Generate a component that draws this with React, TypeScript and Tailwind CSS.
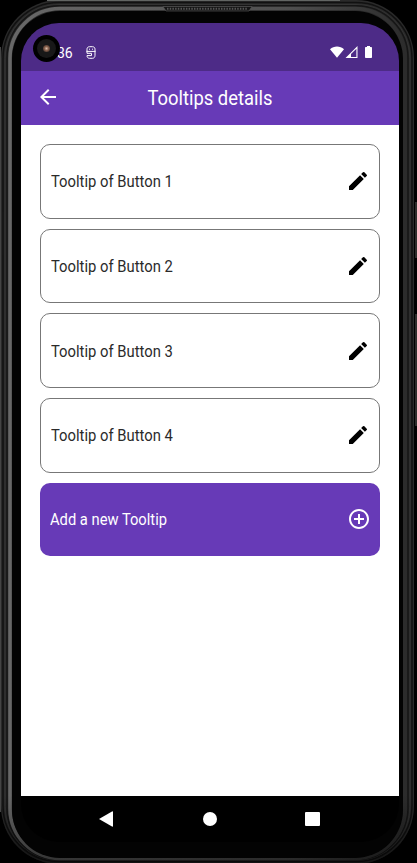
import React from "react";

function Pencil() {
  return (
    <svg viewBox="0 0 24 24" className="mr-[9px] h-6 w-6 shrink-0" fill="#000">
      <path d="M3 17.25V21h3.75L17.81 9.94l-3.75-3.75L3 17.25zM20.71 7.04a.996.996 0 0 0 0-1.41l-2.34-2.34a.996.996 0 0 0-1.41 0l-1.83 1.83 3.75 3.75 1.83-1.83z" />
    </svg>
  );
}

function PhoneBody() {
  return (
    <svg viewBox="0 0 417 863" className="absolute inset-0 h-full w-full" fill="none">
      <defs>
        <linearGradient id="rim" x1="0" y1="0" x2="1" y2="0">
          <stop offset="0" stopColor="#686868" />
          <stop offset="0.7" stopColor="#505050" />
          <stop offset="1" stopColor="#2c2c2c" />
        </linearGradient>
        <linearGradient id="shade" x1="0" y1="0" x2="0" y2="1">
          <stop offset="0.92" stopColor="#000" stopOpacity="0" />
          <stop offset="1" stopColor="#000" stopOpacity="0.5" />
        </linearGradient>
      </defs>
      <path d="M415 202h2v56h-2zM415 314h2v112h-2z" fill="#2d2d2b" />
      <rect x="1" y="0" width="413" height="864" rx="58" fill="#2a2a2a" />
      <path d="M47 .5h293" stroke="#626563" />
      <path d="M.5 47v765" stroke="#444" />
      <rect x="3" y="2.500" width="409" height="859" rx="56" stroke="#111" strokeWidth="1.500" />
      <rect x="5" y="4.500" width="405" height="856" rx="54" stroke="#333" />
      <rect x="7" y="5.800" width="401" height="854" rx="52" stroke="#161616" strokeWidth="1.500" />
      <rect x="10" y="8.500" width="395" height="850" rx="50" stroke="url(#rim)" strokeWidth="3.500" />
      <rect x="1" y="0" width="413" height="864" rx="58" fill="url(#shade)" />
      <rect x="12" y="11" width="391" height="847" rx="48" fill="#030303" />
      <path d="M163 6.500h89l-3 4.500h-83z" fill="#151515" stroke="#555" strokeWidth=".7" />
      <path d="M167 8.800h81" stroke="#555" strokeWidth="2" strokeDasharray="1.500 1.200" />
    </svg>
  );
}

function StatusBar() {
  return (
    <div className="relative flex h-12 shrink-0 items-center bg-[#4d2b87] pt-[10px] pl-[36px] text-white">
      <span className="mt-px text-[14px] leading-[18px]">36</span>
      <svg viewBox="0 0 10 13" className="ml-[13px] h-[13px] w-[10px]" fill="none" stroke="#fff" strokeWidth="1">
        <path d="M1 5V3.2C1 1.700 2 .7 3.500.7h3C8 .7 9 1.700 9 3.200V5M.3 5.400h9.400M1 5.400v1.900h4.700M9 5.400v4c0 1.700-1 2.900-2.500 2.900h-3C2 12.300 1 11.200 1 9.600h4.500V7.500" />
        <path d="M3 3.200h1M6 3.200h1" />
      </svg>
      <svg viewBox="0 0 42 13" className="mr-[27px] ml-auto h-[13px] w-[42px]" fill="#fff">
        <path d="M0 3.200C3.800-.3 10.200-.3 14 3.200L7 11.700z" />
        <path fillRule="evenodd" d="M27.500 0v12H15.500zM26.400 2.700l-5.400 5.400v2.800h5.400z" />
        <path d="M37 0h3v1h1.200c.5 0 .8.300.8.800v9.400c0 .5-.3.800-.8.800h-5.400c-.5 0-.8-.3-.8-.8V1.800c0-.5.300-.8.800-.8H37z" />
      </svg>
      <div className="absolute top-[12px] left-[12px] flex h-[27px] w-[27px] items-center justify-center rounded-full bg-black">
        <div className="flex h-[19px] w-[19px] items-center justify-center rounded-full bg-[#181818]">
          <div className="h-[7px] w-[7px] rounded-full bg-[radial-gradient(circle,#d8b9a5_0%,#805b48_45%,#292323_100%)]" />
        </div>
      </div>
    </div>
  );
}

export default function App() {
  return (
    <div className="relative h-[863px] w-[417px] overflow-hidden bg-black font-['Roboto',sans-serif]">
      <PhoneBody />
      <div className="relative pt-[23px] pl-[21px]">
        <div className="flex h-[819px] w-[378px] flex-col overflow-hidden rounded-[38px]">
          <StatusBar />
          <header className="relative flex h-[54px] shrink-0 items-center justify-center bg-[#673ab7] text-white">
            <svg viewBox="0 0 24 24" className="absolute top-[14px] left-[15px] h-6 w-6" fill="#fff">
              <path d="M20 11H7.830l5.590-5.590L12 4l-8 8 8 8 1.410-1.410L7.830 13H20z" />
            </svg>
            <h1 className="scale-x-[0.92] text-[20px] font-normal">Tooltips details</h1>
          </header>
          <main className="flex flex-1 flex-col gap-[10px] bg-white px-[19px] pt-[19px]">
            {[1, 2, 3, 4].map((n) => (
              <div key={n} className="flex h-[74.700px] shrink-0 items-center justify-between rounded-[10px] border border-[#777] pl-[10px] text-[16px] text-[#2a2a2a]">
                <span className="mt-[2px] origin-left scale-x-[0.925]">Tooltip of Button {n}</span>
                <Pencil />
              </div>
            ))}
            <div className="flex h-[73px] shrink-0 items-center justify-between rounded-[10px] bg-[#673ab7] pr-[9px] pl-[10px] text-[16px] text-white">
              <span className="mt-[2px] origin-left scale-x-[0.92]">Add a new Tooltip</span>
              <svg viewBox="0 0 24 24" className="h-6 w-6" fill="#fff">
                <path d="M13 7h-2v4H7v2h4v4h2v-4h4v-2h-4V7zm-1-5C6.480 2 2 6.480 2 12s4.480 10 10 10 10-4.480 10-10S17.520 2 12 2zm0 18c-4.410 0-8-3.590-8-8s3.590-8 8-8 8 3.590 8 8-3.590 8-8 8z" />
              </svg>
            </div>
          </main>
          <nav className="flex h-[46px] shrink-0 items-center justify-between bg-black pr-[79px] pl-[78px]">
            <svg viewBox="0 0 14 16" className="h-4 w-[14px]" fill="#fff">
              <path d="M0 8 13 .5Q14 0 14 1v14q0 1-1 .5z" />
            </svg>
            <div className="ml-px h-[14px] w-[14px] rounded-full bg-white" />
            <div className="h-[14px] w-[15px] rounded-[1px] bg-white" />
          </nav>
        </div>
      </div>
    </div>
  );
}
